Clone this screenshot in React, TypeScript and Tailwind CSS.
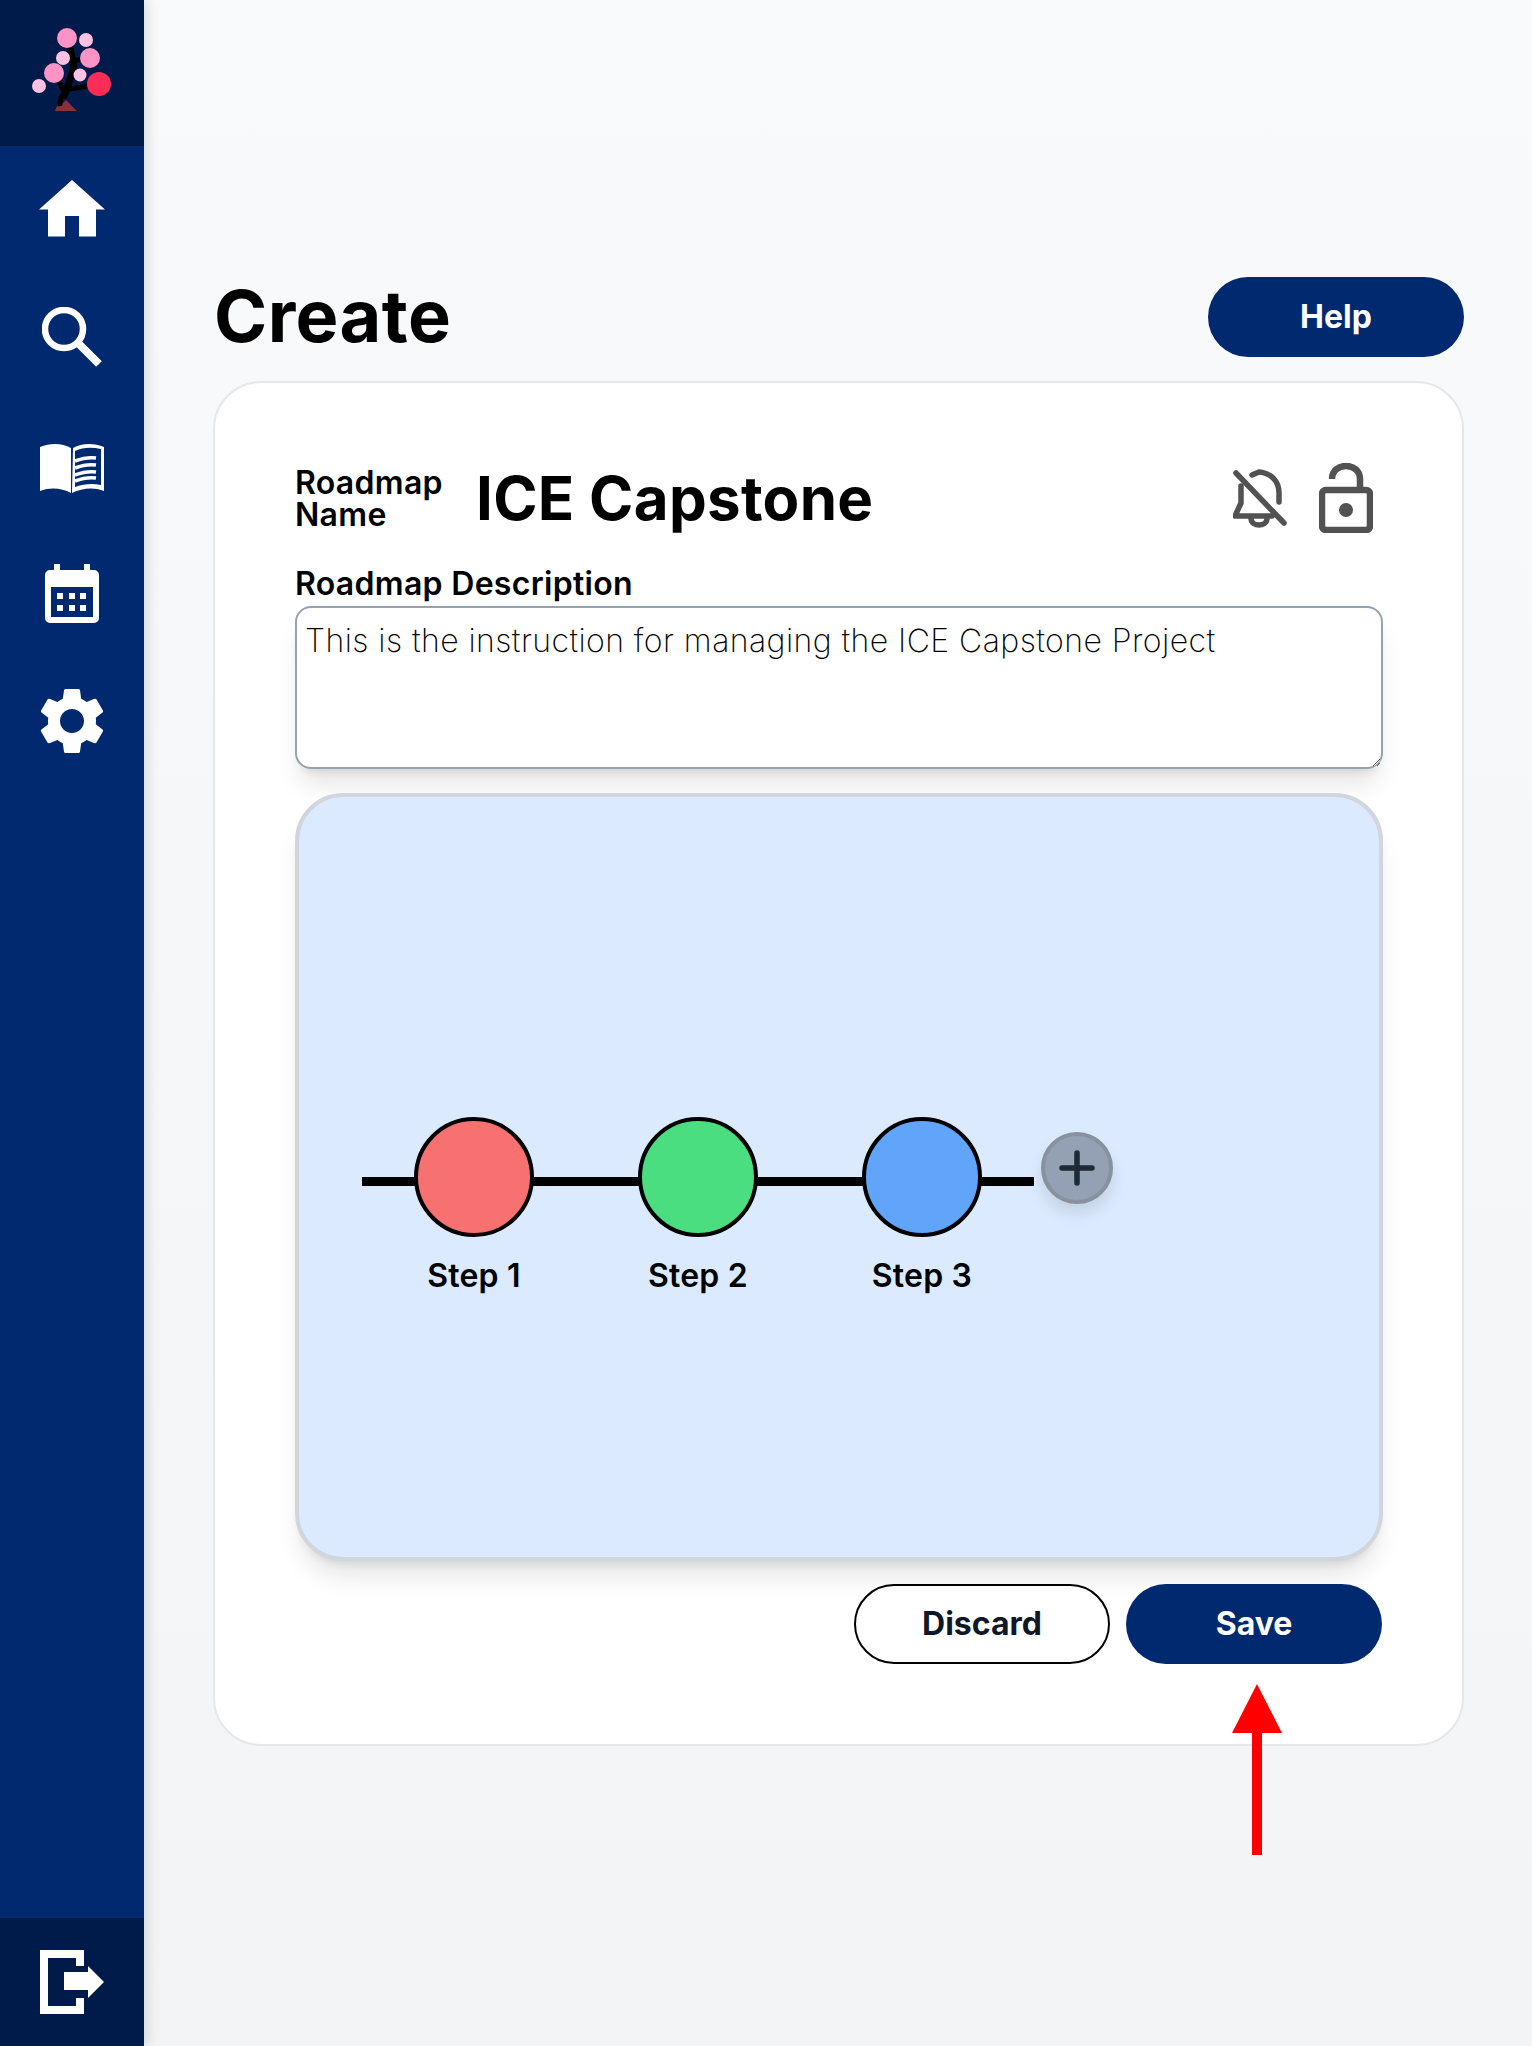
import React from 'react'
import { MdSettings } from 'react-icons/md'

const Logo = () => (
  <svg width="144" height="146" viewBox="0 0 144 146">
    <polygon points="55,111 77,111 66,100 62,104 60,98" fill="#8c2f39" />
    <path d="M70 48 C73 62 75 66 72 74 C68 84 67 90 63 98" stroke="#000" strokeWidth="7" fill="none" />
    <path d="M59 81 L64 92 M65 90 L87 86 M72 62 L81 59 M60 106 C59 100 61 96 65 92" stroke="#000" strokeWidth="5" fill="none" />
    <circle cx="67" cy="38" r="10" fill="#fd94c3" />
    <circle cx="86" cy="40" r="7" fill="#fec1e2" />
    <circle cx="90" cy="58" r="10" fill="#fd94c3" />
    <circle cx="63" cy="58" r="7" fill="#fec1e2" />
    <circle cx="54" cy="73" r="10" fill="#fd94c3" />
    <circle cx="80" cy="75" r="6.5" fill="#fec1e2" />
    <circle cx="39" cy="86" r="7" fill="#fec1e2" />
    <circle cx="99" cy="84" r="12" fill="#fb2d56" />
  </svg>
)

const HomeIcon = () => (
  <svg width="66" height="57" viewBox="0 0 66 57" fill="#fff">
    <path d="M33 0 L66 29.500 H57 V56.500 H40 V36 H26 V56.500 H9 V29.500 H0 Z" />
  </svg>
)

const SearchIcon = () => (
  <svg width="60" height="60" viewBox="0 0 60 60" fill="none" stroke="#fff">
    <circle cx="22" cy="22" r="19" strokeWidth="6.500" />
    <path d="M36 36 L57 57" strokeWidth="8" />
  </svg>
)

const BookIcon = () => (
  <svg width="64" height="51" viewBox="0 0 64 51">
    <path fill="#fff" d="M0 4 C10 0 22 0 31 5 V50 C22 45 10 44 0 48 Z" />
    <path fill="#fff" fillRule="evenodd" d="M33 5 C42 0 54 0 64 4 V48 C54 44 42 45 32 50 L33 5 Z M35 8 V44 C43 41 52 40 61 42 V6 C52 4 43 4 35 8 Z" />
    <path fill="none" stroke="#fff" strokeWidth="3.500" d="M35 18 C43 15 49 14 56 15 M35 25 C43 22 49 21 56 22 M35 32 C43 29 49 28 56 29 M35 38 C43 35 49 34 56 35" />
  </svg>
)

const CalendarIcon = () => (
  <svg width="54" height="59" viewBox="0 0 54 59" fill="#fff">
    <path fillRule="evenodd" d="M9 0 H15 V6 H39 V0 H45 V6 H49 A5 5 0 0 1 54 11 V54 A5 5 0 0 1 49 59 H5 A5 5 0 0 1 0 54 V11 A5 5 0 0 1 5 6 H9 Z M6 23 V53 H48 V23 Z" />
    <rect x="12" y="29" width="6" height="6" />
    <rect x="24" y="29" width="6" height="6" />
    <rect x="35" y="29" width="6" height="6" />
    <rect x="12" y="41" width="6" height="6" />
    <rect x="24" y="41" width="6" height="6" />
    <rect x="35" y="41" width="6" height="6" />
  </svg>
)

const LogoutIcon = () => (
  <svg width="64" height="64" viewBox="0 0 64 64" fill="#fff">
    <path d="M0 0 H44 V16 H36 V8 H8 V56 H36 V48 H44 V64 H0 Z" />
    <path d="M24 22 H48 V16 L64 32 L48 48 V40 H24 Z" />
  </svg>
)

const BellOffIcon = () => (
  <svg width="54" height="60" viewBox="0 0 54 60" fill="none" stroke="#525252" strokeWidth="5.500" strokeLinecap="round" strokeLinejoin="round">
    <path d="M19 7 L26 4 C38 5 46 13 46 25 V34" />
    <path d="M8 18 V35 L2 48 H39" />
    <path d="M18 51 C19 59 33 59 34 51" />
    <path d="M3 5 L51 55" />
  </svg>
)

const LockIcon = () => (
  <svg width="54" height="70" viewBox="0 0 54 70" fill="none" stroke="#525252" strokeWidth="6.500">
    <rect x="3" y="27" width="48" height="40" rx="4" />
    <path d="M13 16 C13 8 19 3 27 3 C35 3 41 8 41 16 V27" />
    <circle cx="27" cy="47" r="7" fill="#525252" stroke="none" />
  </svg>
)

const navIcons = [
  { key: 'home', icon: <HomeIcon />, pos: 'h-[57px]' },
  { key: 'search', icon: <SearchIcon />, pos: 'h-[60px] mt-[70px]' },
  { key: 'book', icon: <BookIcon />, pos: 'h-[51px] mt-[76px]' },
  { key: 'calendar', icon: <CalendarIcon />, pos: 'h-[59px] mt-[70px]' },
  { key: 'settings', icon: <MdSettings size={80} color="#fff" />, pos: 'h-[64px] mt-[66px]' },
]

const steps = [
  { name: 'Step 1', color: 'bg-[#f87171]' },
  { name: 'Step 2', color: 'bg-[#4ade80]' },
  { name: 'Step 3', color: 'bg-[#60a5fa]' },
]

export default function App() {
  return (
    <div className="relative flex h-[2046px] font-['Inter',sans-serif] text-black bg-gradient-to-b from-[#f9fafb] to-[#f3f4f6]">
      {/* Sidebar */}
      <aside className="flex w-[144px] shrink-0 flex-col bg-[#00296f] shadow-[4px_0_12px_rgba(0,0,0,0.12)]">
        <div className="h-[146px] bg-[#001b4a]">
          <Logo />
        </div>
        <nav className="flex flex-1 flex-col items-center pt-[34px]">
          {navIcons.map((item) => (
            <div key={item.key} className={`flex items-center justify-center ${item.pos}`}>
              {item.icon}
            </div>
          ))}
        </nav>
        <div className="flex h-[128px] items-center justify-center bg-[#001b4a]">
          <LogoutIcon />
        </div>
      </aside>

      {/* Main */}
      <main className="flex-1 pl-[69px] pt-[277px]">
        <div className="flex w-[1251px] items-center justify-between">
          <h1 className="-mt-[2px] pl-[1px] text-[72px] font-bold leading-[80px] tracking-[0.4px]">Create</h1>
          <button className="h-[80px] w-[256px] rounded-full bg-[#00296f] text-[32px] font-bold text-white">
            Help
          </button>
        </div>

        <section className="mt-[24px] w-[1251px] rounded-[48px] border-2 border-gray-200 bg-white pb-[80px] pl-20 pr-[79px] pt-20">
          <div className="flex h-[70px] items-center justify-between pr-[10px]">
            <div className="flex items-center gap-[36px]">
              <div className="mt-[2px] w-[145px] text-[32px] font-semibold leading-[32px] tracking-[0.3px]">
                Roadmap
                <br />
                Name
              </div>
              <div className="text-[60px] font-bold leading-[70px] tracking-[0.3px]">ICE Capstone</div>
            </div>
            <div className="flex items-center gap-[32px]">
              <BellOffIcon />
              <LockIcon />
            </div>
          </div>

          <label className="mt-[33px] block text-[32px] font-semibold leading-[36px] tracking-[0.3px]">Roadmap Description</label>
          <textarea
            className="mt-[4px] block h-[163px] w-full rounded-[16px] border-2 border-gray-400 px-2 pb-2 pt-[13px] text-[32px] font-[250] leading-[40px] tracking-[0.43px] shadow-xl"
            defaultValue="This is the instruction for managing the ICE Capstone Project"
          />

          {/* Canvas */}
          <div className="mt-[24px] flex h-[768px] items-start rounded-[48px] border-4 border-gray-300 bg-blue-100 pl-[63px] pt-[320px] shadow-xl">
            {steps.map((step) => (
              <div key={step.name} className="relative flex w-[224px] flex-col items-center">
                <div className="absolute left-0 right-0 top-[60px] h-[9px] bg-black" />
                <div className={`relative h-[120px] w-[120px] rounded-full border-4 border-black ${step.color}`} />
                <div className="mt-[19px] text-[32px] font-semibold leading-[40px] tracking-[0.2px]">{step.name}</div>
              </div>
            ))}
            <button className="ml-[7px] mt-[15px] flex h-[72px] w-[72px] items-center justify-center rounded-full border-4 border-[#87919f] bg-[#94a0b3] shadow-[0_10px_15px_rgba(0,0,0,0.1)]">
              <svg width="36" height="36" viewBox="0 0 36 36" stroke="#1f2937" strokeWidth="5.500" strokeLinecap="round">
                <path d="M18 3 V33 M3 18 H33" />
              </svg>
            </button>
          </div>

          <div className="mt-[23px] flex justify-end gap-[16px] pr-[1px]">
            <button className="h-[80px] w-[256px] rounded-full border-2 border-black bg-white text-[32px] font-bold text-gray-900">
              Discard
            </button>
            <button className="h-[80px] w-[256px] rounded-full bg-[#00296f] text-[32px] font-bold text-white">
              Save
            </button>
          </div>
        </section>
      </main>

      {/* Annotation arrow */}
      <svg className="absolute left-[1232px] top-[1684px]" width="50" height="171" viewBox="0 0 50 171" fill="#ff0000">
        <polygon points="25,0 50,49 0,49" />
        <rect x="20" y="49" width="10" height="122" />
      </svg>
    </div>
  )
}
